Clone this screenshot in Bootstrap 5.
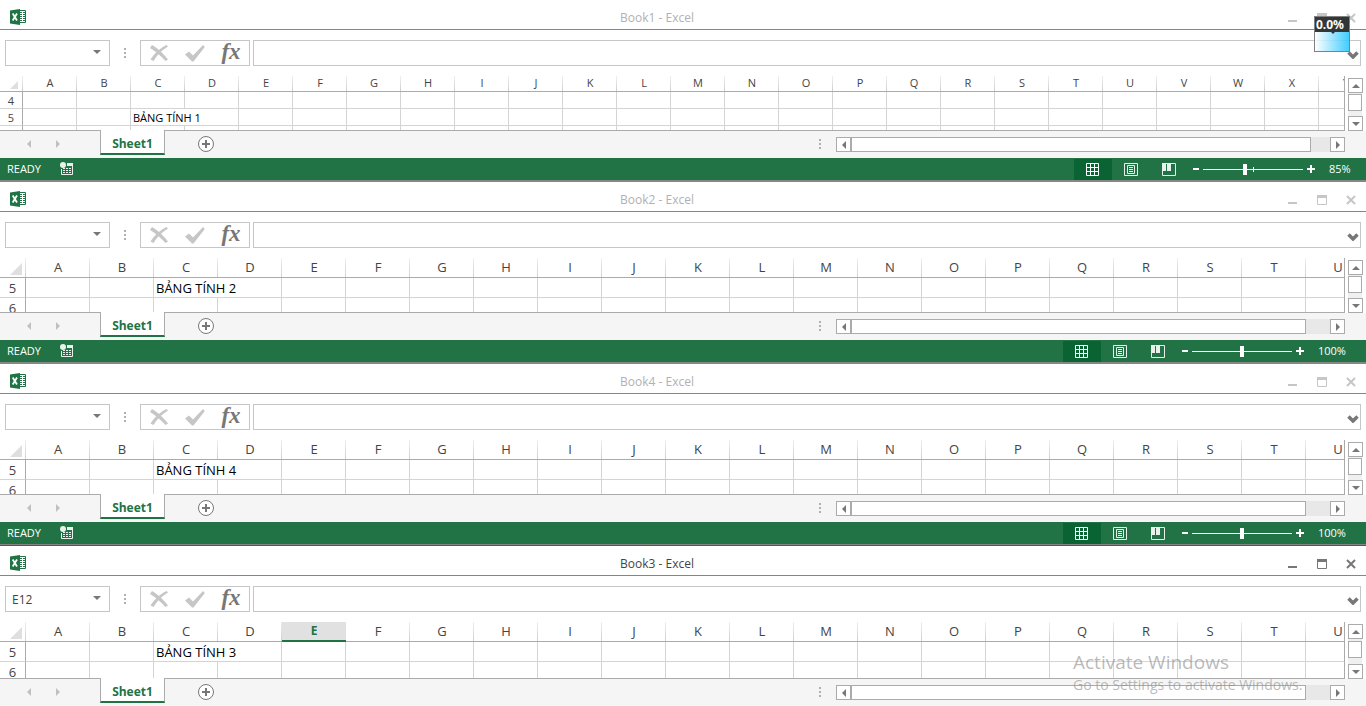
<!DOCTYPE html>
<html lang="vi">
<head>
<meta charset="utf-8">
<meta name="viewport" content="width=device-width, initial-scale=1">
<title>Excel</title>
<link href="https://cdn.jsdelivr.net/npm/bootstrap@5.3.0/dist/css/bootstrap.min.css" rel="stylesheet">
<style>
  :root { --xl-green: #217346; --xl-line: #ababab; --xl-soft: #c6c6c6; --xl-cell: #d4d4d4; }
  body { font-family: "Open Sans", "Noto Sans", sans-serif; font-size: 12px; line-height: 16px; color: #444; background: #fff; overflow-x: hidden; }
  svg { display: block; }
  button { background: none; border: 0; padding: 0; color: inherit; }
  .title-bar { height: 30px; border-bottom: 1px solid #868686; color: #b1b1b1; padding: 6px 1px 0 0; }
  .title-bar .app-icon { margin: 0 10px; padding-bottom: 2px; }
  .win-btn { width: 29px; height: 22px; color: #c6c6c6; display: flex; align-items: center; justify-content: center; }
  .is-active .title-bar { color: #444; }
  .is-active .win-btn { color: #777; }
  .formula-row { padding: 10px 5px; }
  .boxed { height: 26px; border: 1px solid var(--xl-soft); background: #fff; }
  .boxed input { border: 0; outline: 0; min-width: 0; padding: 2px 6px 0; font-size: 12px; color: #444; background: transparent; }
  .name-box { width: 105px; }
  .name-box button { width: 14px; padding: 0 0 3px; flex: none; }
  .name-box input { width: 80px; flex: none; }
  .name-box { justify-content: space-between; padding-right: 2px; }
  .grip { width: 30px; }
  .fx-box { width: 110px; margin-right: 3px; }
  .fx-box button { flex: 1 1 0; display: flex; align-items: center; justify-content: center; }
  .fx-box .fx-label { font: italic bold 23px/22px "Liberation Serif", serif; color: #777; padding-bottom: 2px; }
  .expand-btn { width: 13px; padding-top: 3px; flex: none; }

  .grid-view { height: 55px; }
  .is-active .grid-view { height: 57px; }
  .grid-clip { overflow: hidden; border-bottom: 1px solid var(--xl-line); border-right: 1px solid var(--xl-line); }
  .sheet { table-layout: fixed; border-collapse: separate; border-spacing: 0; width: 1370px; font-size: 13px; line-height: 18px; }
  .sheet th, .sheet td { padding: 0; border-right: 1px solid var(--xl-cell); border-bottom: 1px solid var(--xl-cell); height: 20px; white-space: nowrap; overflow: hidden; vertical-align: bottom; }
  .sheet th { font-weight: 400; text-align: center; }
  .sheet td { color: #000; padding-left: 2px; }
  .sheet thead th { border-right: 0; border-bottom-color: var(--xl-line); background: linear-gradient(#efefef, #cfcfcf) right / 1px 100% no-repeat; width: 64px; line-height: 16px; vertical-align: top; padding-top: 1px; }
  .sheet tbody th { border-right-color: var(--xl-line); }
  .sheet thead th.corner { width: 26px; vertical-align: bottom; padding-bottom: 2px; }
  .sheet .corner svg { margin-left: 10px; }
  .sheet thead th.picked { background: #e1e1e1; color: var(--xl-green); font-size: 12px; font-weight: 700; border-bottom: 2px solid var(--xl-green); }
  .zoomed .sheet { font-size: 11px; line-height: 14px; }
  .zoomed .sheet th, .zoomed .sheet td { height: 17px; }
  .zoomed .sheet thead th { width: 54px; height: 16px; line-height: 14px; padding-top: 0; }
  .zoomed .sheet thead th.corner { width: 23px; }
  .v-scroll { width: 21px; padding: 2px 4px 0 3px; }
  .step-btn { width: 15px; height: 15px; flex: none; border: 1px solid var(--xl-line); background: #fff; color: #777; display: flex; align-items: center; justify-content: center; }
  .v-track { background: #f0f0f0; padding-top: 1px; }
  .is-active .v-track { padding-top: 2px; }
  .v-thumb { height: 17px; border: 1px solid var(--xl-line); background: #fff; }

  .tab-bar { height: 27px; background: #f5f5f5; }
  .tab-nav { width: 100px; padding-left: 27px; padding-right: 40px; height: 25px; color: #c0c0c0; }
  .sheet-tab { width: 65px; height: 25px; margin-top: -1px; border: 1px solid var(--xl-line); border-top: 0; border-bottom: 2px solid var(--xl-green); background: #fff; color: var(--xl-green); font-size: 12px; font-weight: 700; text-decoration: none; text-align: center; line-height: 28px; position: relative; }
  .add-btn { margin: 5px 0 0 33px; }
  .h-scroll { width: 509px; margin-right: 21px; padding-top: 6px; }
  .h-track { background: #e8e8e8; height: 15px; }
  .h-thumb { height: 15px; border: 1px solid var(--xl-line); background: #fff; }
  .h-grip { margin: 8px 15px 0 0; }

  .status-row { height: 24px; background: var(--xl-green); border-bottom: 2px solid #868686; color: #fff; font-size: 11px; padding-left: 7px; }
  .before-active .status-row { border-bottom: 1px solid #868686; box-shadow: 0 1px var(--xl-green); height: 23px; margin-bottom: 1px; }
  .macro-btn { margin-left: 19px; }
  .view-btn { width: 38px; height: 21px; display: flex; align-items: center; justify-content: center; }
  .view-btn.picked { background: #0a6332; padding-right: 1px; }
  .zoom-label { width: 62px; padding-left: 14px; }
  .zoomed .zoom-label { width: 51px; }
  .zoom-range { appearance: none; width: 100px; height: 11px; margin: 0 4px; background: linear-gradient(#fff, #fff) center / 100% 1px no-repeat; }
  .zoomed .zoom-range { background: linear-gradient(#fff, #fff) center / 100% 1px no-repeat, linear-gradient(#fff, #fff) center / 1px 5px no-repeat; }
  .zoom-range::-webkit-slider-thumb { appearance: none; width: 4px; height: 11px; background: #fff; }

  .meter { position: absolute; top: 16px; right: 16px; width: 36px; height: 36px; border: 1px solid #808080; background: linear-gradient(90deg, rgba(255,255,255,.85), rgba(45,200,255,.9)); z-index: 5; }
  .meter div { height: 15px; background: rgba(45,45,45,.95); color: #fff; font: bold 12px/16px "Noto Sans", sans-serif; padding-left: 1px; }
  .meter svg { margin-left: 16px; }
  .watermark { position: absolute; right: 0; top: 650px; width: 293px; color: rgba(140,140,140,.6); pointer-events: none; z-index: 5; font-size: 14px; line-height: 22px; }
  .watermark strong { display: block; font-size: 19px; line-height: 24px; font-weight: 400; }
</style>
</head>
<body>
<svg class="d-none" aria-hidden="true">
  <symbol id="i-app" viewBox="0 0 16 16"><path fill="#fff" stroke="#217346" d="M8 1.5h7.5v12H8z"/><path stroke="#217346" d="M10 3.5h2m1 0h2M10 5.5h2m1 0h2M10 7.5h2m1 0h2M10 9.5h2m1 0h2M10 11.5h2m1 0h2"/><path fill="#217346" d="M0 1.5 10 0v16L0 14.5z"/><path d="m2.700 4.500 4.300 7M7 4.500l-4.300 7" stroke="#fff" stroke-width="1.800"/></symbol>
  <symbol id="i-drop" viewBox="0 0 8 4"><path d="M0 0h8L4 4z" fill="#777"/></symbol>
  <symbol id="i-up" viewBox="0 0 8 4"><path d="M0 4h8L4 0z" fill="#777"/></symbol>
  <symbol id="i-left" viewBox="0 0 4 8"><path d="M4 0v8L0 4z" fill="currentColor"/></symbol>
  <symbol id="i-right" viewBox="0 0 4 8"><path d="M0 0v8l4-4z" fill="currentColor"/></symbol>
  <symbol id="i-dots" viewBox="0 0 2 10"><path d="M0 0h2v2H0zM0 4h2v2H0zM0 8h2v2H0z" fill="#b0b0b0"/></symbol>
  <symbol id="i-cancel" viewBox="0 0 18 16"><path d="M2 0C6 2 13 8 18 14.500L15.500 16C11 11 5 6 0 3zM16.500 0 18 1.500C12 5 7 10 3.500 16L.5 14.500C4 9 10 3 16.500 0z" fill="#c6c6c6"/></symbol>
  <symbol id="i-check" viewBox="0 0 20 17"><path d="M0 9.500 4 6.500l4 4L18 0l1.800 2L8.500 16.500H7z" fill="#c6c6c6"/></symbol>
  <symbol id="i-chevron" viewBox="0 0 12 8"><path d="M1.500 1.500 6 6l4.500-4.500" fill="none" stroke="#777" stroke-width="3.500"/></symbol>
  <symbol id="i-corner" viewBox="0 0 12 12"><path d="M12 0v12H0z" fill="#dfdfdf"/></symbol>
  <symbol id="i-add" viewBox="0 0 16 16"><circle cx="8" cy="8" r="7.500" fill="#fff" stroke="#777"/><path d="M4 8h8M8 4v8" stroke="#777" stroke-width="2"/></symbol>
  <symbol id="i-macro" viewBox="0 0 14 14"><path d="M1.500 7v5.500h11V3" fill="none" stroke="#e8f1ec"/><path d="M3 6.500h2m1 0h2m1 0h2M3 8.500h2m1 0h2m1 0h2M3 10.500h2m1 0h2m1 0h2" stroke="#e8f1ec"/><path d="M7 1h6v3H7z" fill="#e8f1ec"/><circle cx="3" cy="3" r="3" fill="#e8f1ec"/></symbol>
  <symbol id="i-normal" viewBox="0 0 13 13"><path d="M.5.5h12v12H.5zM4.500 0v13M8.500 0v13M0 4.500h13M0 8.500h13" fill="none" stroke="#fff"/></symbol>
  <symbol id="i-page" viewBox="0 0 14 13"><path d="M.5.5h13v12H.5zM3.500 2.500h7v8h-7zM5 4.500h4M5 6.500h4M5 8.500h4" fill="none" stroke="#e8f1ec"/></symbol>
  <symbol id="i-break" viewBox="0 0 14 13"><path d="M.5.5h13v12H.5z" fill="none" stroke="#e8f1ec"/><path d="M0 0h4v8H0zM5 0h4v8H5z" fill="#e8f1ec"/></symbol>
</svg>

<main id="desktop"></main>

<div class="meter"><div>0.0%</div><svg width="4" height="2"><path d="M0 0h4L2 2z" fill="#333"/></svg></div>
<div class="watermark"><strong>Activate Windows</strong>Go to Settings to activate Windows.</div>

<script>
  const books = [
    { name: "Book1", cell: "", label: "BẢNG TÍNH 1", rows: [4, 5, ""], zoom: 85, knob: 42, thumb: 96, cls: "zoomed" },
    { name: "Book2", cell: "", label: "BẢNG TÍNH 2", rows: [5, 6], zoom: 100, knob: 50, thumb: 95, cls: "" },
    { name: "Book4", cell: "", label: "BẢNG TÍNH 4", rows: [5, 6], zoom: 100, knob: 50, thumb: 95, cls: "before-active" },
    { name: "Book3", cell: "E12", label: "BẢNG TÍNH 3", rows: [5, 6], zoom: 100, knob: 50, thumb: 95, cls: "is-active", picked: "E", hideStatus: true }
  ];
  const icon = (id, w, h) => `<svg width="${w}" height="${h}" aria-hidden="true"><use href="#i-${id}"/></svg>`;

  function sheet(b) {
    const cols = [..."ABCDEFGHIJKLMNOPQRSTUVWXYZ"].slice(0, b.zoom < 100 ? 25 : 21);
    const c = b.zoom < 100 ? 8 : 12;
    const head = cols.map(l => `<th scope="col"${l === b.picked ? ' class="picked"' : ""}>${l}</th>`).join("");
    const body = b.rows.map(r => `<tr><th scope="row">${r}</th>` +
      cols.map(l => r !== 5 ? "<td></td>" : l === "C" ? `<td colspan="2">${b.label}</td>` : l === "D" ? "" : "<td></td>").join("") + "</tr>").join("");
    return `<table class="sheet"><thead><tr><th class="corner">${icon("corner", c, c)}</th>${head}</tr></thead><tbody>${body}</tbody></table>`;
  }

  function statusBar(b) {
    return `<footer class="status-row d-flex align-items-center">
      <span>READY</span><button class="macro-btn me-auto" aria-label="Record macro">${icon("macro", 14, 14)}</button>
      <button class="view-btn picked" aria-label="Normal">${icon("normal", 13, 13)}</button>
      <button class="view-btn" aria-label="Page layout">${icon("page", 14, 13)}</button>
      <button class="view-btn" aria-label="Page break preview">${icon("break", 14, 13)}</button>
      <button class="ms-1" aria-label="Zoom out"><svg width="7" height="8"><path d="M1 3h6v2H1z" fill="#fff"/></svg></button>
      <input type="range" class="zoom-range" value="${b.knob}" aria-label="Zoom">
      <button aria-label="Zoom in"><svg width="8" height="8"><path d="M0 3h8v2H0zM3 0h2v8H3z" fill="#fff"/></svg></button>
      <span class="zoom-label">${b.zoom}%</span></footer>`;
  }

  document.getElementById("desktop").innerHTML = books.map(b => `
  <section class="${b.cls}">
    <header class="title-bar d-flex align-items-center">
      <span class="app-icon">${icon("app", 16, 16)}</span>
      <span class="flex-fill text-center">${b.name} - Excel</span>
      <button class="win-btn" aria-label="Minimize"><svg width="9" height="10"><path d="M0 7h9v2H0z" fill="currentColor"/></svg></button>
      <button class="win-btn" aria-label="Maximize"><svg width="10" height="10"><path d="M.5.5h9v9h-9z" fill="none" stroke="currentColor"/><path d="M0 0h10v3H0z" fill="currentColor"/></svg></button>
      <button class="win-btn" aria-label="Close"><svg width="10" height="10"><path d="m1 1 8 8M9 1 1 9" stroke="currentColor" stroke-width="2"/></svg></button>
    </header>
    <div class="formula-row d-flex">
      <div class="boxed name-box d-flex"><input value="${b.cell}" aria-label="Name box"><button aria-label="Names">${icon("drop", 8, 4)}</button></div>
      <div class="grip d-flex align-items-center justify-content-center">${icon("dots", 2, 10)}</div>
      <div class="boxed fx-box d-flex"><button aria-label="Cancel">${icon("cancel", 18, 16)}</button><button aria-label="Enter">${icon("check", 20, 17)}</button><button class="fx-label" aria-label="Insert function">fx</button></div>
      <div class="boxed flex-fill d-flex"><input class="flex-fill" aria-label="Formula"><button class="expand-btn" aria-label="Expand">${icon("chevron", 12, 8)}</button></div>
    </div>
    <div class="grid-view d-flex">
      <div class="grid-clip flex-fill">${sheet(b)}</div>
      <div class="v-scroll d-flex flex-column flex-shrink-0">
        <button class="step-btn" aria-label="Up">${icon("up", 8, 4)}</button>
        <div class="v-track flex-fill"><div class="v-thumb"></div></div>
        <button class="step-btn" aria-label="Down">${icon("drop", 8, 4)}</button>
      </div>
    </div>
    <nav class="tab-bar d-flex align-items-start">
      <div class="tab-nav d-flex align-items-center justify-content-between">${icon("left", 4, 8)}${icon("right", 4, 8)}</div>
      <a class="sheet-tab" href="#">Sheet1</a>
      <button class="add-btn me-auto" aria-label="New sheet">${icon("add", 16, 16)}</button>
      <div class="h-grip">${icon("dots", 2, 10)}</div>
      <div class="h-scroll d-flex"><button class="step-btn" aria-label="Left">${icon("left", 4, 8)}</button>
        <div class="h-track flex-fill"><div class="h-thumb" style="width:${b.thumb}%"></div></div>
        <button class="step-btn" aria-label="Right">${icon("right", 4, 8)}</button></div>
    </nav>
    ${b.hideStatus ? "" : statusBar(b)}
  </section>`).join("");
</script>
<script src="https://cdn.jsdelivr.net/npm/bootstrap@5.3.0/dist/js/bootstrap.bundle.min.js"></script>
</body>
</html>
